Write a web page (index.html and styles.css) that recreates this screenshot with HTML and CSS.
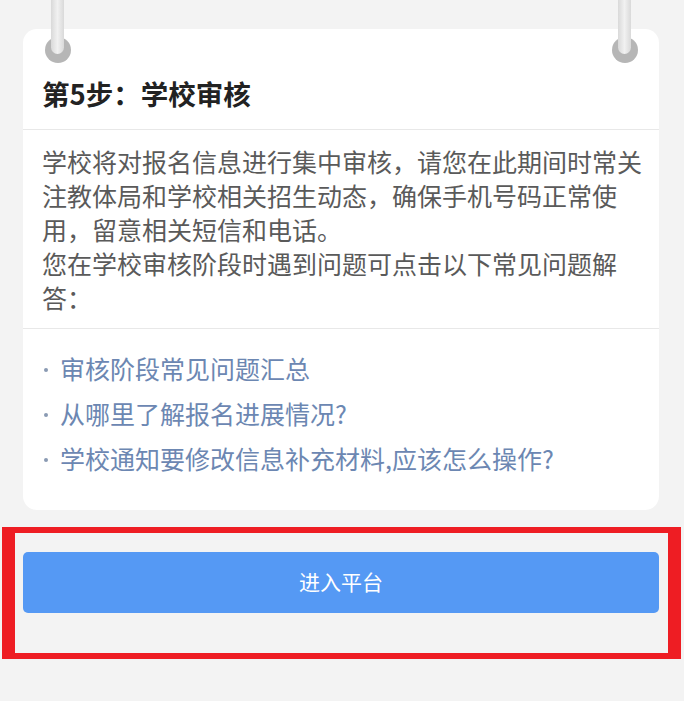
FILE: index.html
```html
<!DOCTYPE html>
<html lang="zh-CN">
<head>
<meta charset="UTF-8">
<meta name="viewport" content="width=device-width, initial-scale=1.0">
<title>第5步：学校审核</title>
<link rel="stylesheet" href="styles.css">
</head>
<body>

<div class="page">
    <div class="step-card">
        <span class="hook hook-left"></span>
        <span class="hook hook-right"></span>

        <div class="step-title">第5步：学校审核</div>

        <div class="step-desc">
            学校将对报名信息进行集中审核，请您在此期间时常关注教体局和学校相关招生动态，确保手机号码正常使用，留意相关短信和电话。<br>
            您在学校审核阶段时遇到问题可点击以下常见问题解答：
        </div>

        <ul class="faq-list">
            <li><a href="#">审核阶段常见问题汇总</a></li>
            <li><a href="#">从哪里了解报名进展情况?</a></li>
            <li><a href="#">学校通知要修改信息补充材料,应该怎么操作?</a></li>
        </ul>
    </div>
</div>

<div class="action-box">
    <button class="enter-btn">进入平台</button>
</div>

</body>
</html>
```

FILE: styles.css
```css
body {
    margin: 0;
    background-color: #f3f3f3;
    font-family: "Noto Sans CJK SC", "Noto Sans", sans-serif;
}

.page {
    padding: 29px 25px 0 23px;
}

.step-card {
    position: relative;
    background: #fff;
    border-radius: 14px;
}

/* hanging hooks on top of the card */
.hook {
    position: absolute;
    top: -29px;
    width: 26px;
    height: 63px;
}

.hook-left { left: 22px; }
.hook-right { right: 21px; }

.hook::before {
    content: "";
    position: absolute;
    left: 0;
    bottom: 0;
    width: 26px;
    height: 26px;
    border-radius: 50%;
    background: #b6b6b6;
}

.hook::after {
    content: "";
    position: absolute;
    left: 6px;
    top: 0;
    width: 13px;
    height: 54px;
    border-radius: 0 0 7px 7px;
    background: linear-gradient(to right, #d9d9d9, #f1f1f1 50%, #d9d9d9);
}

.step-title {
    padding: 44px 19px 16px;
    font-size: 27.5px;
    line-height: 40px;
    font-weight: bold;
    color: #222;
    border-bottom: 1px solid #e8e8e8;
}

.step-desc {
    padding: 14px 16px 14px 19px;
    font-size: 25px;
    line-height: 34px;
    color: #5a5a5a;
    border-bottom: 1px solid #e8e8e8;
}

.faq-list {
    list-style: none;
    margin: 0;
    padding: 17px 16px 29px 19px;
}

.faq-list li {
    font-size: 25px;
    line-height: 45px;
    color: #6c87b2;
}

.faq-list li::before {
    content: "";
    display: inline-block;
    width: 4px;
    height: 4px;
    border-radius: 50%;
    background: #8a9ab3;
    margin: 0 12px 0 2px;
    vertical-align: 7px;
}

.faq-list a {
    color: #6c87b2;
    text-decoration: none;
}

/* red highlight frame round the button */
.action-box {
    margin: 17px 3px 0 2px;
    border: solid #ee1d23;
    border-width: 6px 13px;
    padding: 19px 9px 40px 8px;
}

.enter-btn {
    display: block;
    width: 100%;
    height: 61px;
    padding: 0 0 4px;
    border: none;
    border-radius: 5px;
    background: #5599f4;
    color: #fff;
    font-family: inherit;
    font-size: 21px;
    cursor: pointer;
}
```
